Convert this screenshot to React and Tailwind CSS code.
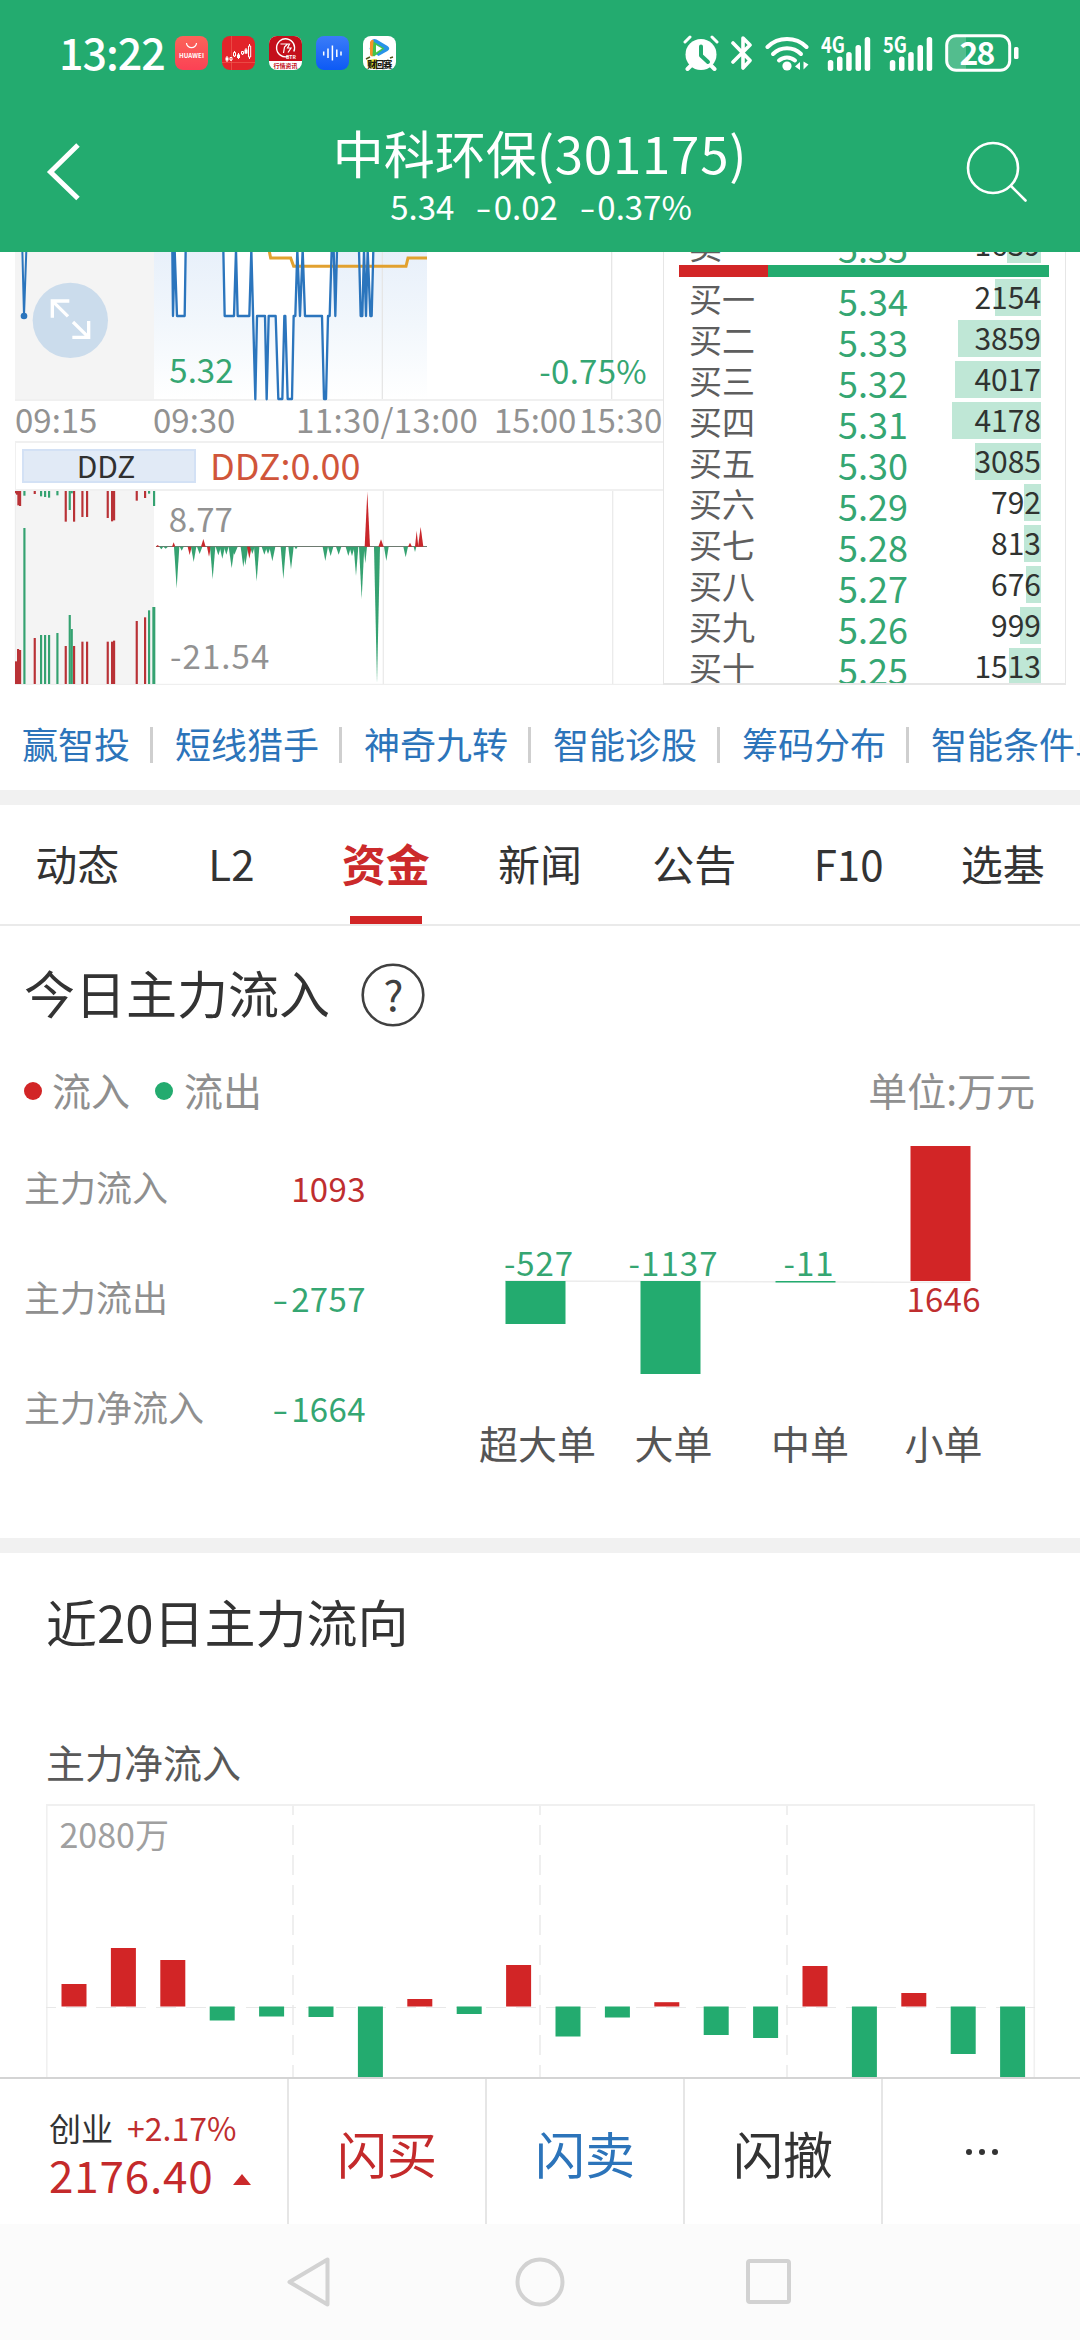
import React from "react";

const GREEN = "#23ab6f";
const RED = "#d22526";

/* ---------- status bar ---------- */

function AppIcons() {
  return (
    <div className="ml-[13px] flex gap-[14px]">
      <svg width="33" height="34" viewBox="0 0 33 34">
        <defs>
          <linearGradient id="hw" x1="0" y1="0" x2="0" y2="1">
            <stop offset="0" stopColor="#fb6459" />
            <stop offset="1" stopColor="#fb4155" />
          </linearGradient>
        </defs>
        <rect width="33" height="34" rx="8" fill="url(#hw)" />
        <path d="M11.500 7a5 4.600 0 0 0 10 0" fill="none" stroke="#fff" strokeWidth="1.200" />
        <text x="16.500" y="21.800" textAnchor="middle" fontSize="6.200" fontWeight="700" fill="#fff" textLength="25">HUAWEI</text>
      </svg>
      <svg width="33" height="34" viewBox="0 0 33 34">
        <rect width="33" height="34" rx="8" fill="#e2242a" />
        <path d="M9.500 0v34M0 26.500h33" stroke="#ee5a50" strokeWidth=".7" />
        <path d="M5 20v6M9 21v4M12.500 15v6M16.500 17v6M20.500 15v4M24 12v6M27.500 8v15" stroke="#fff" strokeWidth="1" />
        <path d="M3.500 21.500h3v3h-3zM15 18.500h3v3.500h-3zM22.500 13.500h3v4h-3z" fill="#fff" />
        <path d="M8 21.500h2v2.500h-2zM11.500 16.500h2v3.500h-2zM19.500 15.500h2v2.500h-2zM26.500 10h2.200v11h-2.200z" fill="#e2242a" stroke="#fff" strokeWidth="1" />
      </svg>
      <svg width="33" height="34" viewBox="0 0 33 34">
        <rect width="33" height="34" rx="8" fill="#fff" />
        <path d="M0 25V8a8 8 0 0 1 8-8h17a8 8 0 0 1 8 8v17z" fill="#c40f1b" />
        <path d="M24.800 15.500A9 9 0 1 0 19 20.500" fill="none" stroke="#fff" strokeWidth="1.400" />
        <path d="M11.500 8h7l-3 3-1 6M17.500 8h3l-2 4h3.500l-3 4.500" fill="none" stroke="#fff" strokeWidth="1.200" />
        <text x="17" y="23" fontSize="5" fontWeight="700" fill="#fff">BTR</text>
        <text x="16.500" y="31.500" textAnchor="middle" fontSize="6" fontWeight="700" fill="#c40f1b">行情资讯</text>
      </svg>
      <svg width="33" height="34" viewBox="0 0 33 34">
        <defs>
          <linearGradient id="vc" x1="0" y1="0" x2="0" y2="1">
            <stop offset="0" stopColor="#3b7cf8" />
            <stop offset="1" stopColor="#0d5af5" />
          </linearGradient>
        </defs>
        <rect width="33" height="34" rx="8" fill="url(#vc)" />
        <path d="M7.700 15.500v4M12 12.500v9.500M16.400 9.500v15M20.800 13.500v7.500M25 15.500v4" stroke="#fff" strokeWidth="1.500" />
      </svg>
      <svg width="33" height="34" viewBox="0 0 33 34">
        <rect width="33" height="34" rx="8" fill="#fff" />
        <path d="M9.500 3.500q2-.8 4 0l11 6.500q3.500 2.500 0 5l-9 5-9-7z" fill="#2793e8" />
        <path d="M7 6q1-2.500 3.500-2.200l2 14-3 2.700Q7 20.500 7 18z" fill="#f6922a" />
        <path d="M10.500 5.500l11 7-10.500 8-1.500-1z" fill="#45c34a" />
        <path d="M13 9l6 3.500-6 4z" fill="#fff" />
        <path d="M4 24l10-1v10l-8-1z" fill="#e9dc2b" />
        <text x="16.800" y="31.500" textAnchor="middle" fontSize="9" fontWeight="900" fill="#1b1b14" textLength="25">财回赛</text>
        <path d="M3 23l4-2M27 22l3-1" stroke="#55551a" strokeWidth="1.500" />
      </svg>
    </div>
  );
}

function SignalBars({ label }) {
  return (
    <svg width="50" height="36" viewBox="0 0 50 36" fill="#fff">
      <text x="0" y="17.500" fontSize="22" fontWeight="700" textLength="24" lengthAdjust="spacingAndGlyphs">{label}</text>
      <rect x="6.800" y="25" width="5.500" height="11" rx="2.500" />
      <rect x="16" y="21.500" width="5.500" height="14.500" rx="2.500" />
      <rect x="25.200" y="17" width="5.500" height="19" rx="2.500" />
      <rect x="34.500" y="10" width="5.500" height="26" rx="2.500" />
      <rect x="43.700" y="2" width="5.500" height="34" rx="2.500" />
    </svg>
  );
}

function StatusBar() {
  return (
    <div className="flex h-[106px] items-center pr-[61px] pl-[59px] text-white">
      <span className="-mt-[4px] w-[103px] text-[43px] leading-[60px] font-medium tracking-[-1px] whitespace-nowrap">13:22</span>
      <AppIcons />
      <div className="ml-auto flex items-center">
        <svg width="36" height="36" viewBox="0 0 36 36" className="mr-[12px]">
          <circle cx="18" cy="19.500" r="15.500" fill="#fff" />
          <path d="M8.500 30L4.500 34M27.500 30l4 4" stroke="#fff" strokeWidth="4" strokeLinecap="round" />
          <path d="M2 7l5-5M29 2l5 5" stroke="#fff" strokeWidth="3" strokeLinecap="round" />
          <path d="M18 11.500v9l7 6.500" fill="none" stroke={GREEN} strokeWidth="4" strokeLinecap="round" strokeLinejoin="round" />
        </svg>
        <svg width="22" height="36" viewBox="0 0 22 36" className="mr-[12px]">
          <path d="M2 8l17 17.500-7 7.500V3l7 7L2 27" fill="none" stroke="#fff" strokeWidth="3.600" strokeLinejoin="round" strokeLinecap="round" />
        </svg>
        <svg width="44" height="36" viewBox="0 0 44 36" className="mr-[12px]">
          <g fill="none" stroke="#fff" strokeWidth="4" strokeLinecap="round">
            <path d="M2.500 12a28 28 0 0 1 39 0" />
            <path d="M8 19a20 20 0 0 1 28 0" />
            <path d="M14 25.500a12 12 0 0 1 16 0" />
          </g>
          <circle cx="22" cy="31" r="4.600" fill="#fff" />
          <path d="M30 31.500l5-4.500v8zM43.500 29.500L38.500 34.500v-8z" fill="#fff" />
        </svg>
        <div className="mr-[12px]"><SignalBars label="4G" /></div>
        <div className="mr-[12px]"><SignalBars label="5G" /></div>
        <svg width="74" height="40" viewBox="0 0 74 40">
          <path d="M3 13q0-10 10-10h8v34h-8q-10 0-10-10z" fill="#fff" opacity=".22" />
          <rect x="1.700" y="2.700" width="63" height="34.600" rx="9.500" fill="none" stroke="#fff" strokeWidth="3" />
          <rect x="69" y="14" width="4.500" height="12" rx="1.500" fill="#fff" />
          <text x="32.500" y="31.500" textAnchor="middle" fontSize="32" fontWeight="700" fill="#fff" textLength="36">28</text>
        </svg>
      </div>
    </div>
  );
}

function Minus() {
  return <span className="mr-[2px] inline-block origin-right scale-x-[1.4]">-</span>;
}

function TitleBar() {
  return (
    <div className="flex h-[146px] text-white">
      <div className="w-[120px] pt-[34px] pl-[44px]">
        <svg width="40" height="64" viewBox="0 0 40 64">
          <path d="M34 5L6.500 32 34 58.500" fill="none" stroke="#fff" strokeWidth="5" />
        </svg>
      </div>
      <div className="flex flex-1 flex-col items-center pt-[16px]">
        <h1 className="h-[60px] text-[51px] leading-[60px] whitespace-nowrap">
          中科环保<span className="tracking-[0.8px]">(301175)</span>
        </h1>
        <div className="mt-[6px] flex gap-[26px] pl-[2px] text-[33px] leading-[36px]">
          <span>5.34</span>
          <span><Minus />0.02</span>
          <span><Minus />0.37%</span>
        </div>
      </div>
      <div className="w-[120px] pt-[34px] pl-[4px]">
        <svg width="66" height="66" viewBox="0 0 66 66" fill="none" stroke="#fff" strokeWidth="2.600">
          <circle cx="29" cy="28" r="25" />
          <path d="M47 46l14.500 14.500" strokeLinecap="round" />
        </svg>
      </div>
    </div>
  );
}

/* ---------- intraday chart ---------- */

const TOP = 15;
const PRICE_LINE = [
  [517, TOP], [519, 213], [524, TOP], [531, 213], [554, 213], [557, TOP],
  [670, TOP], [674, 213], [702, 213], [708, TOP], [713, 213], [748, 213], [754, TOP],
  [766, 463], [771, 213], [795, 213], [800, 463], [806, 213], [827, 213], [835, 462], [847, 462],
  [853, 213], [856, 213], [863, 462], [876, 462], [881, 213], [886, 213], [892, TOP],
  [900, 213], [908, TOP], [915, 213], [966, 213], [972, 462], [978, 462], [984, 213], [989, 213],
  [995, TOP], [1001, TOP], [1006, 213], [1011, TOP],
  [1077, TOP], [1082, 213], [1087, 213], [1092, TOP], [1098, 213], [1103, TOP], [1111, 213],
  [1115, 213], [1120, TOP],
].map((p) => p.join(",")).join(" ");

function IntradayChart() {
  return (
    <svg className="block" width="663" height="149" viewBox="0 21 1989 447">
      <defs>
        <linearGradient id="area" x1="0" y1="21" x2="0" y2="463" gradientUnits="userSpaceOnUse">
          <stop offset="0" stopColor="#e8f0fa" />
          <stop offset="0.500" stopColor="#f2f7fc" />
          <stop offset="1" stopColor="#ffffff" />
        </linearGradient>
      </defs>
      <rect x="45" y="15" width="417" height="450" fill="#f4f4f4" />
      <polygon points={`462,15 ${PRICE_LINE} 1281,15 1281,463 462,463`} fill="url(#area)" />
      <path d="M1147 15V463M1835 15V463" stroke="#e6e6e6" strokeWidth="4" />
      <path d="M45 465H1989" stroke="#f0f0f0" strokeWidth="6" />
      <polyline points="807,15 812,39 872,39 881,64 1218,64 1224,39 1281,39" fill="none" stroke="#e2a12f" strokeWidth="9" />
      <polyline points={PRICE_LINE} fill="none" stroke="#2b75bd" strokeWidth="7" strokeLinejoin="round" />
      <path d="M67 15L72 213 79 15" fill="none" stroke="#2b75bd" strokeWidth="6" />
      <circle cx="72" cy="213" r="10" fill="#2b75bd" />
      <circle cx="211" cy="226" r="113" fill="#cbdcec" />
      <path d="M157 218V168H208M159 170L204 214M217 277H266V228M263 274L219 231" fill="none" stroke="#fff" strokeWidth="10" />
      <g fontSize="99" fill="#35a672">
        <text x="508" y="415">5.32</text>
        <text x="1618" y="416" textLength="322">-0.75%</text>
      </g>
    </svg>
  );
}

function TimeAxis() {
  return (
    <div className="flex h-[40px] pl-[15px] text-[33px] leading-[37px] whitespace-nowrap text-[#929292]">
      <span className="w-[138px]">09:15</span>
      <span className="w-[143px]">09:30</span>
      <span className="w-[198px] tracking-[0.4px]">11:30/13:00</span>
      <span className="w-[85px]">15:00</span>
      <span className="tracking-[0.2px]">15:30</span>
    </div>
  );
}

/* x, top, bottom, colour */
const PRE_TOP = [
  [51, 44, "r"], [48, 40, "r"], [55, 76, "r"], [60, 78, "r"], [73, 47, "g"], [104, 42, "r"], [123, 49, "g"], [135, 51, "g"],
  [147, 53, "g"], [172, 46, "g"], [197, 125, "r"], [209, 90, "g"], [215, 40, "g"], [222, 125, "r"], [247, 111, "r"],
  [261, 111, "r"], [323, 114, "r"], [336, 124, "r"], [342, 121, "r"], [410, 62, "r"], [435, 54, "r"], [447, 41, "g"],
  [462, 78, "g"],
];
const PRE_BOTTOM = [
  [48, 544, "r"], [54, 507, "r"], [60, 510, "r"], [73, 144, "g"], [104, 474, "r"], [123, 465, "g"], [135, 465, "g"],
  [147, 465, "g"], [172, 459, "g"], [197, 498, "r"], [209, 405, "g"], [215, 447, "g"], [222, 498, "r"], [247, 485, "r"],
  [261, 485, "r"], [323, 485, "r"], [336, 485, "r"], [342, 482, "r"], [410, 423, "r"], [435, 412, "r"], [447, 391, "g"],
  [460, 381, "g"],
];
/* centre x, half width, tip y, colour */
const SPIKES = [
  [473, 6, 195, "r"], [484, 6, 208, "g"], [497, 7, 206, "g"], [521, 5, 187, "r"], [530, 8, 324, "g"], [545, 6, 212, "g"],
  [569, 6, 225, "r"], [581, 8, 246, "g"], [599, 8, 222, "g"], [610, 7, 177, "r"], [627, 6, 230, "r"], [638, 8, 298, "g"],
  [655, 8, 226, "g"], [667, 8, 236, "g"], [679, 7, 224, "g"], [695, 9, 265, "g"], [703, 10, 224, "g"], [730, 8, 262, "g"], [736, 9, 256, "g"],
  [748, 7, 236, "r"], [757, 7, 222, "g"], [770, 8, 304, "g"], [793, 8, 224, "g"], [804, 8, 222, "g"], [817, 9, 244, "g"],
  [850, 8, 297, "g"], [873, 8, 268, "g"], [888, 5, 208, "g"], [976, 8, 243, "g"], [992, 8, 228, "g"], [1016, 8, 224, "g"],
  [1045, 8, 228, "g"], [1056, 8, 228, "g"], [1068, 7, 288, "g"], [1085, 8, 357, "g"], [1096, 5, 250, "g"],
  [1102, 8, 35, "r"], [1131, 9, 610, "g"], [1143, 8, 178, "r"], [1159, 7, 243, "g"],
  [1217, 7, 232, "g"], [1230, 6, 188, "r"], [1245, 4, 216, "g"], [1250, 5, 152, "r"], [1262, 8, 141, "r"],
];
const SPIKE_COLOR = { r: "#b93236", g: "#35a271" };

function DdzChart() {
  return (
    <svg className="block" width="663" height="194" viewBox="0 33 1989 582">
      <rect x="45" y="30" width="417" height="582" fill="#f4f4f4" />
      <path d="M1150 30V612M1838 30V612" stroke="#ebebeb" strokeWidth="4" />
      <path d="M45 613H1989M46 30V613" stroke="#ececec" strokeWidth="3" />
      {PRE_TOP.map(([x, y, c], i) => (
        <rect key={i} x={x - 3} y="33" width="6.500" height={y - 33} fill={SPIKE_COLOR[c]} />
      ))}
      {PRE_BOTTOM.map(([x, y, c], i) => (
        <rect key={i} x={x - 3} y={y} width={x === 460 ? 9 : 6.500} height={612 - y} fill={SPIKE_COLOR[c]} />
      ))}
      <path d="M468 199.500H1281" stroke="#6d7a70" strokeWidth="3" />
      {SPIKES.map(([x, w, y, c], i) => (
        <path key={i} d={`M${x - w} 200L${x} ${y} ${x + w} 200z`} fill={c === "r" ? "#c9272b" : "#35a271"} />
      ))}
      <g fontSize="99" fill="#929292">
        <text x="506" y="155">8.77</text>
        <text x="510" y="567" textLength="298">-21.54</text>
      </g>
    </svg>
  );
}

/* ---------- order book ---------- */

const BIDS = [
  ["买一", "5.34", "2154", 46], ["买二", "5.33", "3859", 83], ["买三", "5.32", "4017", 86],
  ["买四", "5.31", "4178", 89], ["买五", "5.30", "3085", 66], ["买六", "5.29", "792", 17],
  ["买七", "5.28", "813", 17], ["买八", "5.27", "676", 15], ["买九", "5.26", "999", 21],
  ["买十", "5.25", "1513", 32],
];

function BookRow({ label, price, volume, bar }) {
  return (
    <div className="flex h-[41px] shrink-0 items-start pr-[24px] pl-[25px]">
      <span className="w-[149px] text-[33px] leading-[39px] text-[#5e5e5e]">{label}</span>
      <span className="mt-[1px] text-[36px] leading-[41px] text-[#35a672]">{price}</span>
      <span
        className="ml-auto flex h-[37px] justify-end bg-[#bfe7d6] text-[30px] leading-[34px] text-[#303331]"
        style={{ width: bar }}
      >
        {volume}
      </span>
    </div>
  );
}

function OrderBook() {
  return (
    <div className="flex h-[433px] w-[403px] flex-col overflow-hidden border-x border-b-2 border-[#e6e6e6]">
      <div className="h-[13px] shrink-0 overflow-hidden">
        <div className="-mt-[26px]">
          <BookRow label="卖一" price="5.35" volume="1639" bar={34} />
        </div>
      </div>
      <div className="ml-[15px] flex h-[12px] w-[370px] shrink-0">
        <div className="w-[89px] bg-[#d22526]" />
        <div className="flex-1 bg-[#23ab6f]" />
      </div>
      <div className="mt-[2px] flex flex-col">
        {BIDS.map(([l, p, v, b]) => (
          <BookRow key={l} label={l} price={p} volume={v} bar={b} />
        ))}
      </div>
    </div>
  );
}

function QuoteArea() {
  return (
    <div className="flex h-[433px] bg-white">
      <div className="flex w-[663px] flex-col">
        <IntradayChart />
        <TimeAxis />
        <div className="ml-[15px] flex h-[50px] items-center border-y-2 border-l border-[#f0f0f0] pl-[6px]">
          <div className="flex h-[34px] w-[174px] items-center justify-center border-2 border-[#d3e1f5] bg-[#e1eaf6] pr-[6px] pb-[3px] text-[30px] leading-[30px] text-[#303030]">
            DDZ
          </div>
          <span className="-mt-[4px] ml-[14px] text-[36px] leading-[40px] text-[#d0553a]">DDZ:0.00</span>
        </div>
        <DdzChart />
      </div>
      <OrderBook />
    </div>
  );
}

/* ---------- links and tabs ---------- */

const LINKS = ["赢智投", "短线猎手", "神奇九转", "智能诊股", "筹码分布", "智能条件单"];

function LinkStrip() {
  return (
    <div className="flex h-[105px] items-center overflow-hidden pl-[22px] text-[36px] leading-[44px] whitespace-nowrap text-[#2c74ba]">
      {LINKS.map((t, i) => (
        <div key={t} className="mt-[15px] flex shrink-0 items-center">
          {i > 0 && <span className="mr-[22px] ml-[20px] h-[36px] w-[3px] bg-[#cfcfcf]" />}
          <span className="-mt-[4px]">{t}</span>
        </div>
      ))}
    </div>
  );
}

const TABS = ["动态", "L2", "资金", "新闻", "公告", "F10", "选基"];

function Tabs() {
  return (
    <div className="flex h-[121px] border-b-2 border-[#eaeaea] text-[42px] leading-[116px] text-[#333]">
      {TABS.map((t) =>
        t === "资金" ? (
          <div key={t} className="flex flex-1 flex-col items-center text-[44px] font-bold text-[#cb2a2b]">
            <span className="h-[111px]">{t}</span>
            <span className="h-[9px] w-[72px] bg-[#d22526]" />
          </div>
        ) : (
          <div key={t} className="flex-1 text-center">{t}</div>
        ),
      )}
    </div>
  );
}

/* ---------- today's main-force flow ---------- */

const SUMMARY = [
  ["主力流入", "1093", "text-[#bf2e2f]"],
  ["主力流出", "-2757", "text-[#35a672]"],
  ["主力净流入", "-1664", "text-[#35a672]"],
];

const ORDER_SIZES = [
  { name: "超大单", value: "-527", x: 505.5, h: -43, lx: 538.5, len: 69, nx: 537.5 },
  { name: "大单", value: "-1137", x: 640.5, h: -93, lx: 673, len: 89, nx: 673.5 },
  { name: "中单", value: "-11", x: 775.5, h: -1.5, lx: 808.5, len: 50, nx: 810 },
  { name: "小单", value: "1646", x: 910.5, h: 135, lx: 943.5, len: 74, nx: 943.5 },
];

function OrderSizeChart() {
  return (
    <svg className="block" width="600" height="360" viewBox="450 1130 600 360">
      <path d="M505 1282L970 1283.500" stroke="#ececec" strokeWidth="1.500" />
      {ORDER_SIZES.map((o) => {
        const up = o.h > 0;
        return (
          <g key={o.name} textAnchor="middle">
            <rect x={o.x} y={up ? 1282 - o.h : 1282} width="60" height={Math.abs(o.h)} fill={up ? RED : GREEN} />
            <text x={o.lx} y={up ? 1312.700 : 1276.700} fontSize="33" textLength={o.len} fill={up ? "#bf2e2f" : "#35a672"}>
              {o.value}
            </text>
            <text x={o.nx} y="1460" fontSize="39" fill="#555">{o.name}</text>
          </g>
        );
      })}
    </svg>
  );
}

function TodayFlow() {
  return (
    <section className="h-[612px]">
      <div className="flex h-[132px] items-center pl-[24px]">
        <h2 className="mt-0 text-[51px] leading-[60px] text-[#333]">今日主力流入</h2>
        <svg className="mt-[5px] ml-[31px]" width="64" height="64" viewBox="0 0 64 64">
          <circle cx="32" cy="32" r="30.300" fill="none" stroke="#404040" strokeWidth="2.600" />
          <text x="32.500" y="48" textAnchor="middle" fontSize="42" fill="#404040">?</text>
        </svg>
      </div>
      <div className="flex h-[62px] items-center pr-[45px] pl-[24px] text-[39px] leading-[44px] text-[#8f8f8f]">
        <span className="mt-[4px] h-[18px] w-[18px] rounded-full bg-[#d22526]" />
        <span className="ml-[10px]">流入</span>
        <span className="mt-[4px] ml-[25px] h-[18px] w-[18px] rounded-full bg-[#23ab6f]" />
        <span className="ml-[11px]">流出</span>
        <span className="ml-auto">单位:万元</span>
      </div>
      <div className="flex pt-[9px]">
        <div className="w-[450px] pt-[2px]">
          {SUMMARY.map(([label, value, tone]) => (
            <div key={label} className="flex h-[110px] w-[366px] items-center justify-between pl-[24px]">
              <span className="text-[36px] leading-[44px] text-[#8f8f8f]">{label}</span>
              <span className={"pt-[3px] text-[33px] leading-[44px] tracking-[0.4px] " + tone}>
                {value.startsWith("-") ? <><Minus />{value.slice(1)}</> : value}
              </span>
            </div>
          ))}
        </div>
        <OrderSizeChart />
      </div>
    </section>
  );
}

/* ---------- 20-day flow ---------- */

const DAYS = [22.5, 58.5, 46.5, -14, -10, -10.5, -80, 7.5, -7.5, 41.5, -30, -11, 4.3, -28.500, -31.5, 40.500, -80, 13.500, -47.5, -80];

function TwentyDayFlow() {
  return (
    <section className="h-[524px] overflow-hidden pl-[46px]">
      <h2 className="h-[138px] pt-[38px] text-[51px] leading-[60px] text-[#333]">近20日主力流向</h2>
      <h3 className="h-[113px] pt-[48px] text-[39px] leading-[44px] text-[#595959]">主力净流入</h3>
      <svg className="block" width="990" height="273" viewBox="46 1804 990 273">
        <path d="M46 1805H1035" stroke="#f0f0f0" strokeWidth="2" />
        <path d="M46.800 1805V2080M1034.300 1805V2080" stroke="#f0f0f0" strokeWidth="1.600" />
        <path d="M293 1805V2080M540 1805V2080M787 1805V2080" stroke="#efefef" strokeWidth="2" strokeDasharray="20 10" strokeDashoffset="10" />
        <path d="M46 2007.500H1035" stroke="#e8e8e8" strokeWidth="1" strokeDasharray="20 10" strokeDashoffset="10" />
        {DAYS.map((v, i) => (
          <rect key={i} x={61.500 + i * 49.400} y={v > 0 ? 2006.500 - v : 2006.500} width="25" height={Math.abs(v)} fill={v > 0 ? RED : GREEN} />
        ))}
        <text x="59.500" y="1847.500" fontSize="34" fill="#a0a0a0">2080万</text>
      </svg>
    </section>
  );
}

/* ---------- bottom ---------- */

function ActionBar() {
  return (
    <div className="flex h-[147px] border-t-2 border-[#d4d4d4] bg-white">
      <div className="w-[289px] border-r-2 border-[#e6e6e6] pt-[26px] pl-[49px]">
        <div className="flex h-[44px] items-center text-[32px] leading-[44px] text-[#333]">
          创业<span className="ml-[14px] text-[#bf2e2f]">+2.17%</span>
        </div>
        <div className="flex h-[50px] items-center">
          <span className="text-[44px] leading-[50px] tracking-[0.8px] text-[#c42a2b]">2176.40</span>
          <svg className="mt-[11px] ml-[20px]" width="18" height="11" viewBox="0 0 18 11">
            <path d="M9 0l9 11H0z" fill="#cb2a2b" />
          </svg>
        </div>
      </div>
      <div className="w-[198px] border-r-2 border-[#e6e6e6] text-center text-[50px] leading-[146px] text-[#c42a2b]">闪买</div>
      <div className="w-[198px] border-r-2 border-[#e6e6e6] text-center text-[50px] leading-[146px] text-[#2c74ba]">闪卖</div>
      <div className="w-[198px] border-r-2 border-[#e6e6e6] text-center text-[50px] leading-[146px] text-[#333]">闪撤</div>
      <div className="flex flex-1 items-center justify-center gap-[7px]">
        <span className="h-[6px] w-[6px] rounded-full bg-[#333]" />
        <span className="h-[6px] w-[6px] rounded-full bg-[#333]" />
        <span className="h-[6px] w-[6px] rounded-full bg-[#333]" />
      </div>
    </div>
  );
}

function NavBar() {
  return (
    <div className="flex h-[116px] items-start bg-[#fbfbfb] pt-[33px] pl-[286px]">
      <svg width="50" height="50" viewBox="0 0 50 50" fill="none" stroke="#d2d2d2" strokeWidth="4" strokeLinejoin="round">
        <path d="M41.500 2.500v45L3.500 25z" />
      </svg>
      <svg className="ml-[179px]" width="50" height="50" viewBox="0 0 50 50" fill="none" stroke="#d2d2d2" strokeWidth="4">
        <circle cx="25" cy="25" r="22.500" />
      </svg>
      <svg className="ml-[179px]" width="50" height="50" viewBox="0 0 50 50" fill="none" stroke="#d2d2d2" strokeWidth="4">
        <rect x="4" y="4" width="41" height="41" rx="2" />
      </svg>
    </div>
  );
}

export default function App() {
  return (
    <main className="h-[2340px] w-[1080px] overflow-hidden bg-white font-['Noto_Sans_CJK_SC','Noto_Sans',sans-serif]">
      <header className="h-[252px] bg-[#23ab6f]">
        <StatusBar />
        <TitleBar />
      </header>
      <QuoteArea />
      <LinkStrip />
      <div className="h-[15px] bg-[#f1f1f1]" />
      <Tabs />
      <TodayFlow />
      <div className="h-[15px] bg-[#f1f1f1]" />
      <TwentyDayFlow />
      <ActionBar />
      <NavBar />
    </main>
  );
}
